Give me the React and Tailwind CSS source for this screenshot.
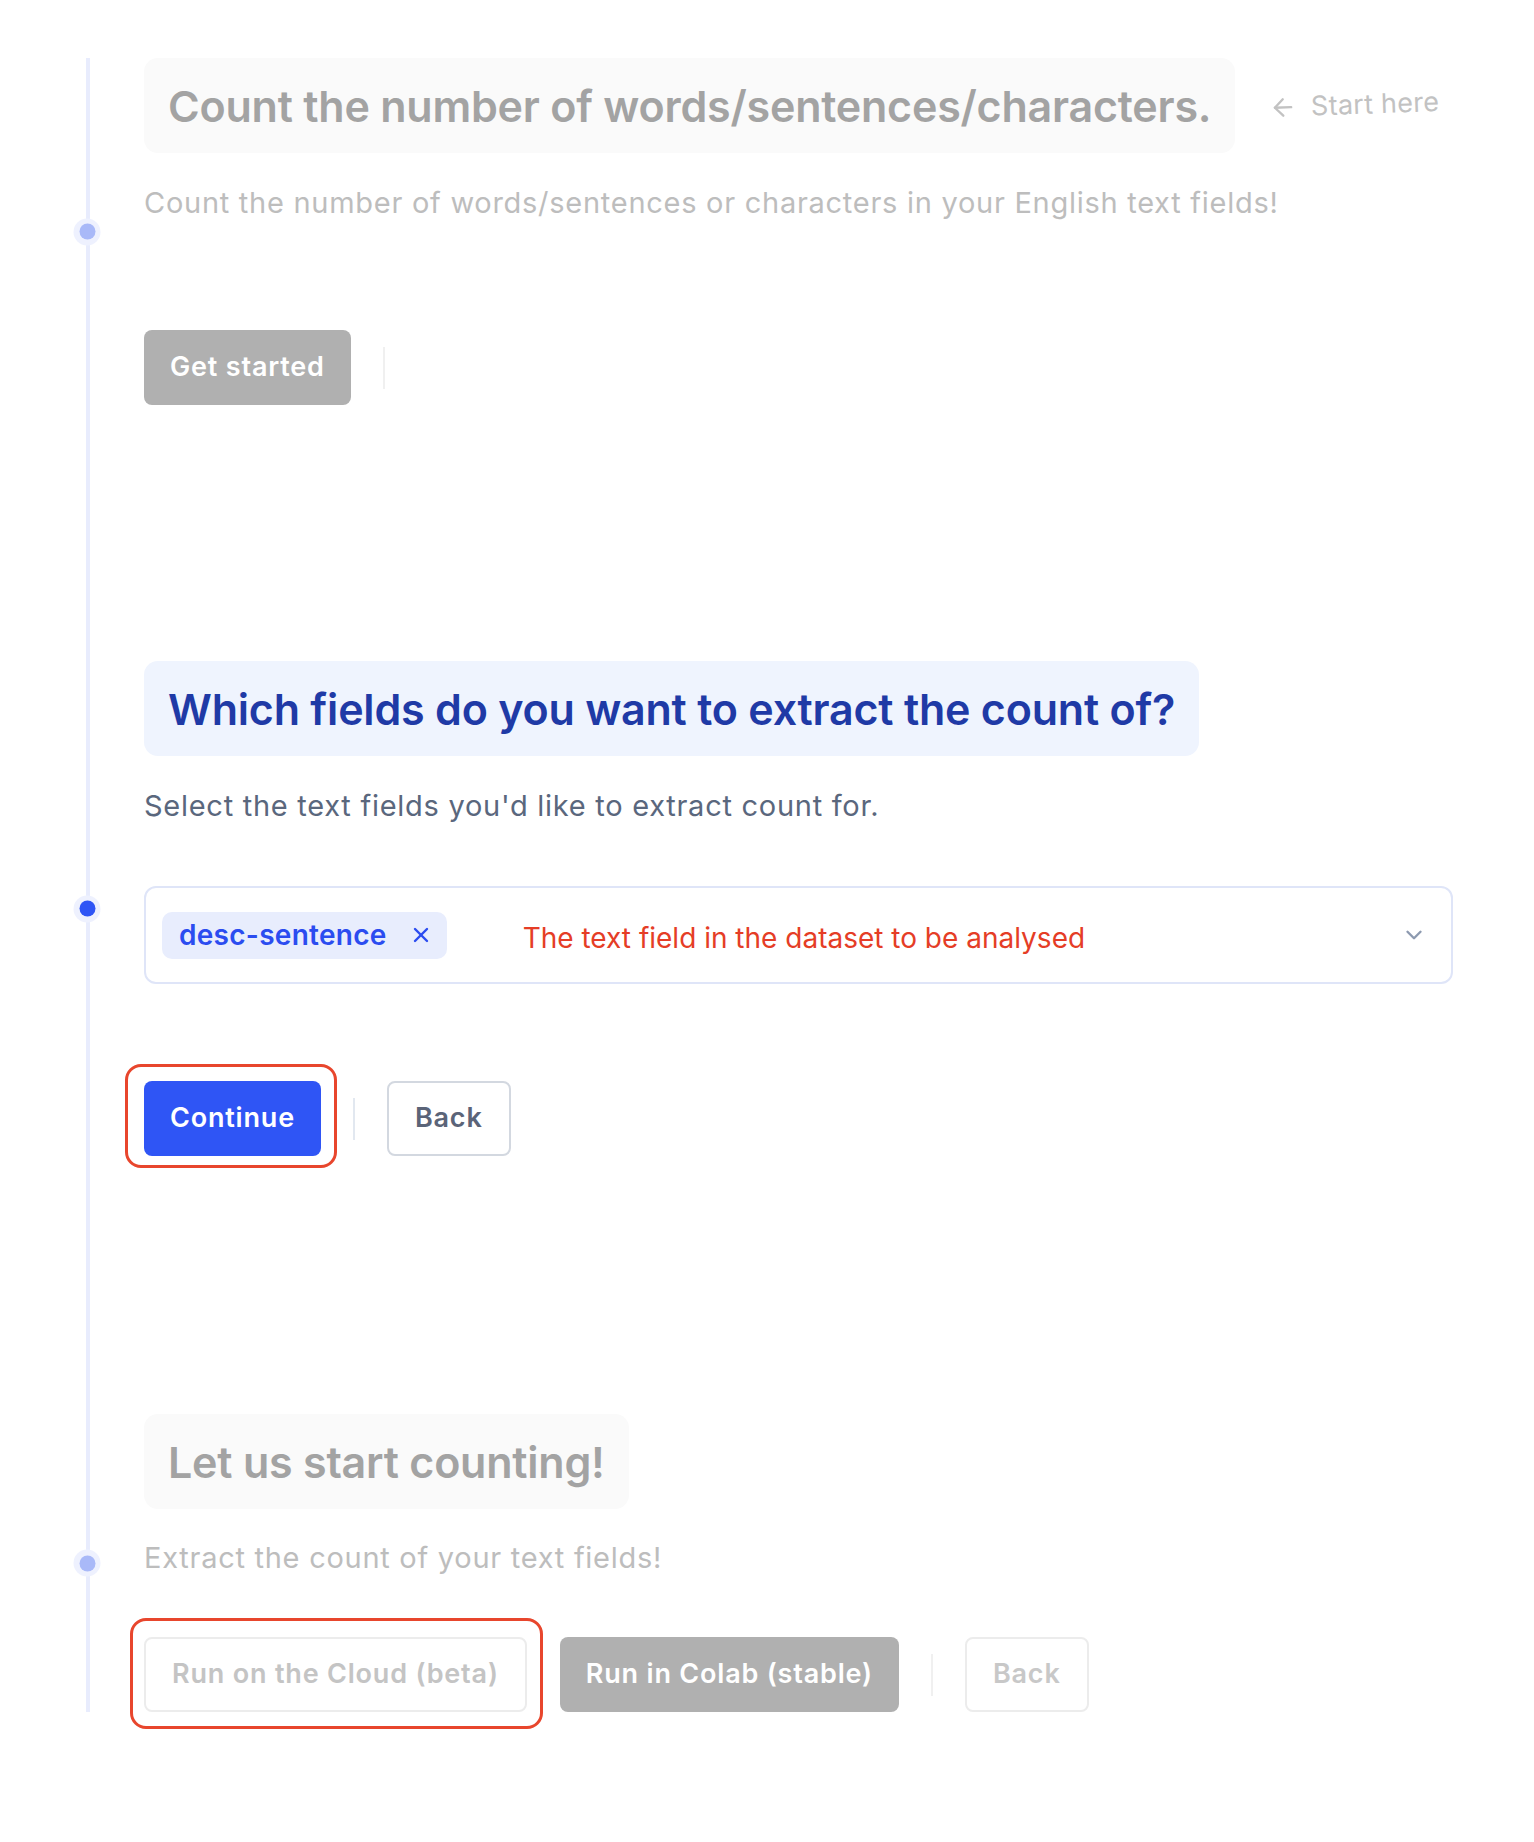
import React from 'react';
import { ArrowLeft, ChevronDown, X } from 'lucide-react';

const FONT = "font-['Inter','Noto_Sans',sans-serif]";

function Dot({ active }) {
  return (
    <span className="absolute left-[-57px] top-1/2 -translate-x-1/2 -translate-y-1/2 flex items-center justify-center w-[27px] h-[27px] rounded-full bg-[#eef1fe]">
      <span className={active ? 'w-[16px] h-[16px] rounded-full bg-[#2f55f5]' : 'w-[16px] h-[16px] rounded-full bg-[#a9b9f8]'} />
    </span>
  );
}

function Highlight({ ring, children }) {
  // red annotation ring drawn over a button
  return (
    <div className="relative">
      <span className={`pointer-events-none absolute rounded-[16px] border-[3px] border-[#e8462d] ${ring}`} />
      {children}
    </div>
  );
}

function Divider({ tone = 'bg-[#f0f0f0]' }) {
  return <span className={`w-[2px] h-[42px] mx-[32px] ${tone}`} />;
}

const BTN = 'h-[75px] px-[26px] rounded-[8px] text-[27px] tracking-[0.03em] font-semibold';
const TITLE = 'text-[43px] leading-[52px] font-semibold tracking-[-0.005em]';
const SUB = 'text-[29px] leading-[38px] tracking-[0.025em]';

export default function App() {
  return (
    <div className={`min-h-screen bg-white ${FONT}`}>
      <div className="pt-[58px] pb-[131px]">
        <div className="ml-[86px] border-l-4 border-[#e8ecfd] pl-[54px] pr-[81px]">
          {/* step 1 */}
          <section className="relative">
            <Dot />
            <div className="flex items-center">
              <div className="rounded-[14px] bg-[#fafafa] px-6 h-[95px] flex items-center">
                <h1 className={`${TITLE} text-[#a3a3a3]`}>
                  Count the number of words/sentences/characters.
                </h1>
              </div>
              <div className="ml-[34px] flex items-center gap-[14px] text-[#c2c2c2] -rotate-2">
                <ArrowLeft size={28} strokeWidth={2} />
                <span className="text-[27px] tracking-[0.01em]">Start here</span>
              </div>
            </div>
            <p className={`mt-[31px] ${SUB} text-[#bdbdbd]`}>
              Count the number of words/sentences or characters in your English text fields!
            </p>
            <div className="mt-[108px] flex items-center">
              <button className={`${BTN} bg-[#b0b0b0] text-white`}>Get started</button>
              <Divider />
            </div>
          </section>

          {/* step 2 */}
          <section className="relative mt-[256px]">
            <Dot active />
            <div className="inline-flex rounded-[14px] bg-[#eff4fe] px-6 h-[95px] items-center">
              <h2 className={`${TITLE} text-[#1f3aa6]`}>
                Which fields do you want to extract the count of?
              </h2>
            </div>
            <p className={`mt-[31px] ${SUB} text-[#5a677d]`}>
              Select the text fields you'd like to extract count for.
            </p>
            <div className="mt-[61px] h-[98px] rounded-[12px] border-2 border-[#dfe5f8] flex items-center pl-[16px] pr-[24px]">
              <span className="h-[47px] rounded-[10px] bg-[#e8edfd] flex items-center pl-[17px] pr-[14px] gap-[22px] text-[#2b4cf0]">
                <span className="text-[28px] font-semibold tracking-[0.01em]">desc-sentence</span>
                <X size={24} strokeWidth={2.4} />
              </span>
              <span className="ml-[76px] mt-[6px] text-[28px] text-[#e53d26]">The text field in the dataset to be analysed</span>
              <ChevronDown className="ml-auto text-[#8d9ab0]" size={26} strokeWidth={2.2} />
            </div>
            <div className="mt-[97px] flex items-center">
              <Highlight ring="-left-[19px] -right-[16px] -top-[17px] -bottom-[12px]">
                <button className={`${BTN} bg-[#2f55f5] text-white`}>Continue</button>
              </Highlight>
              <Divider tone="bg-[#e2e8f0]" />
              <button className={`${BTN} px-[23px] border-2 border-[#d3d8e0] bg-white text-[#5b6478]`}>Back</button>
            </div>
          </section>

          {/* step 3 */}
          <section className="relative mt-[258px]">
            <Dot />
            <div className="inline-flex rounded-[14px] bg-[#fafafa] px-6 h-[95px] items-center">
              <h2 className={`${TITLE} text-[#a3a3a3]`}>Let us start counting!</h2>
            </div>
            <p className={`mt-[30px] ${SUB} text-[#bdbdbd]`}>Extract the count of your text fields!</p>
            <div className="mt-[60px] flex items-center">
              <Highlight ring="-left-[14px] -right-[16px] -top-[19px] -bottom-[17px]">
                <button className={`${BTN} px-[24px] border-2 border-[#ececec] bg-white text-[#c4c4c4]`}>
                  Run on the Cloud (beta)
                </button>
              </Highlight>
              <button className={`${BTN} ml-[33px] bg-[#b0b0b0] text-white`}>Run in Colab (stable)</button>
              <Divider />
              <button className={`${BTN} px-[24px] border-2 border-[#ececec] bg-white text-[#c8c8c8]`}>Back</button>
            </div>
          </section>
        </div>
      </div>
    </div>
  );
}
